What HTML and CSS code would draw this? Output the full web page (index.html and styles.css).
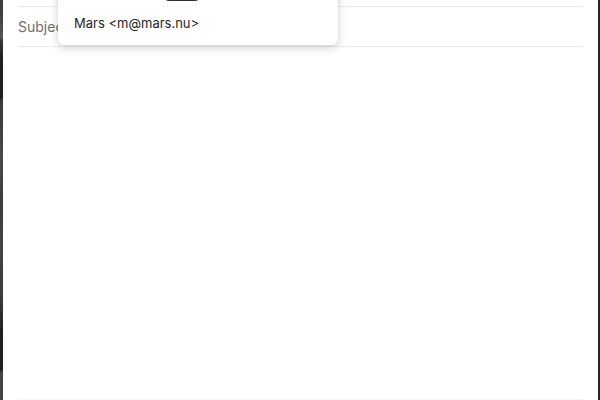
FILE: index.html
```html
<!DOCTYPE html>
<html>
<head>
<meta charset="utf-8">
<link rel="stylesheet" href="styles.css">
</head>
<body>
<div class="window">
  <div class="edge edge-left"></div>
  <div class="compose">
    <div class="field field-to"></div>
    <div class="field field-subject"><span class="label">Subject</span></div>
    <div class="body-area"></div>
    <div class="footer"></div>
  </div>
  <div class="edge edge-right"></div>

  <div class="suggest">
    <div class="suggest-top"><span class="pill"></span></div>
    <div class="suggest-item">Mars &lt;m@mars.nu&gt;</div>
  </div>
</div>
</body>
</html>
```
FILE: styles.css
```css
html, body {
  margin: 0;
  padding: 0;
  background: #fff;
  font-family: Inter, "Noto Sans", sans-serif;
}
.window {
  position: relative;
  display: flex;
  width: 600px;
  height: 400px;
  overflow: hidden;
}
.edge-left {
  width: 3px;
  background: linear-gradient(to bottom,
    #3a3a3a 0, #444 20px, #555 38px, #3a3a3a 40px, #1e1e1e 60px, #1e1e1e 98px,
    #3a3a3a 100px, #4a4a4a 160px, #3c3c3c 200px, #444 250px, #3a3a3a 300px,
    #1e1e1e 335px, #1e1e1e 370px, #444 372px, #444 400px);
}
.edge-right {
  width: 3px;
  background: linear-gradient(to right, #fff 0, #fff 0.5px, #1a1a1a 1px, #2a2a2a 3px);
}
.compose {
  flex: 1;
  display: flex;
  flex-direction: column;
  padding: 0 14px 0 15px;
}
.field {
  border-bottom: 1px solid #ebebeb;
}
.field-to {
  height: 6px;
}
.field-subject {
  height: 39px;
  display: flex;
  align-items: center;
}
.label {
  font-size: 14px;
  color: #6e6e6e;
}
.body-area {
  flex: 1;
}
.footer {
  height: 1px;
  background: #f5f5f5;
}
.suggest {
  position: absolute;
  left: 58px;
  top: -40px;
  width: 280px;
  background: #fff;
  border-radius: 6px;
  box-shadow: 0 3px 10px rgba(0,0,0,0.18), 0 0 1px rgba(0,0,0,0.12);
}
.suggest-top {
  height: 41px;
  display: flex;
  align-items: flex-end;
  padding-left: 105px;
}
.pill {
  display: block;
  width: 38px;
  height: 20px;
  background: #2e2e2e;
  border-radius: 6px;
}
.suggest-item {
  padding: 14px 16px 14px 16px;
  font-size: 13px;
  line-height: 16px;
  color: #262626;
}
```
